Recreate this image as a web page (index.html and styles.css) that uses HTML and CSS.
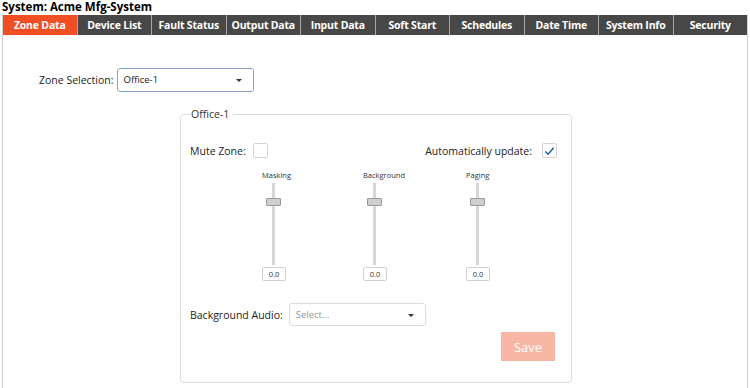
FILE: index.html
```html
<!DOCTYPE html>
<html>
<head>
  <meta charset="utf-8">
  <title>Acme Mfg-System - Zone Data</title>
  <link rel="stylesheet" href="styles.css">
</head>
<body>
  <div class="sys-title">System: Acme Mfg-System</div>

  <div class="panel">
    <nav class="tabs">
      <a class="tab active">Zone Data</a>
      <a class="tab">Device List</a>
      <a class="tab">Fault Status</a>
      <a class="tab">Output Data</a>
      <a class="tab">Input Data</a>
      <a class="tab">Soft Start</a>
      <a class="tab">Schedules</a>
      <a class="tab">Date Time</a>
      <a class="tab">System Info</a>
      <a class="tab">Security</a>
    </nav>

    <div class="zone-row">
      <label class="zone-label">Zone Selection:</label>
      <div class="select select-zone">Office-1<span class="caret"></span></div>
    </div>

    <fieldset class="zone-box">
      <legend>Office-1</legend>

      <div class="toggles">
        <label class="check">Mute Zone: <span class="box"></span></label>
        <label class="check auto">Automatically update:
          <span class="box">
            <svg width="14" height="14" viewBox="0 0 14 14"><polyline points="2.5,7.5 5.5,10.5 11.5,3.5" fill="none" stroke="#1d5fa8" stroke-width="1.6"/></svg>
          </span>
        </label>
      </div>

      <div class="sliders">
        <div class="slider">
          <div class="slider-name">Masking</div>
          <div class="track"><span class="thumb"></span></div>
          <div class="value">0.0</div>
        </div>
        <div class="slider">
          <div class="slider-name">Background</div>
          <div class="track"><span class="thumb"></span></div>
          <div class="value">0.0</div>
        </div>
        <div class="slider">
          <div class="slider-name">Paging</div>
          <div class="track"><span class="thumb"></span></div>
          <div class="value">0.0</div>
        </div>
      </div>

      <div class="audio-row">
        <label>Background Audio:</label>
        <div class="select select-audio"><span class="placeholder">Select...</span><span class="caret"></span></div>
      </div>

      <div class="actions">
        <button class="save" disabled>Save</button>
      </div>
    </fieldset>
  </div>
</body>
</html>
```

FILE: styles.css
```css
body {
  margin: 0;
  font-family: "Open Sans", "Noto Sans", sans-serif;
  font-size: 10.5px;
  color: #222;
  background: #fff;
}
.sys-title {
  font-weight: bold;
  font-size: 11.5px;
  color: #000;
  height: 15px;
  line-height: 14px;
  padding-left: 2px;
}
.panel {
  margin-left: 2px;
  width: 744px;
  height: 373px;
  border-left: 1px solid #cfcfcf;
  border-right: 1px solid #cfcfcf;
}
.tabs {
  display: flex;
  height: 20px;
}
.tab {
  flex: 1;
  background: #474747;
  color: #fff;
  font-weight: bold;
  font-size: 10.5px;
  line-height: 20px;
  text-align: center;
  border-right: 1px solid #a8a8a8;
  letter-spacing: -0.2px;
}
.tab:last-child {
  border-right: none;
}
.tab.active {
  background: #f04e23;
}
.zone-row {
  display: flex;
  align-items: center;
  margin-top: 33px;
  padding-left: 36px;
}
.zone-label {
  margin-right: 3px;
  font-size: 10.5px;
}
.select {
  position: relative;
  box-sizing: border-box;
  background: #fff;
  border-radius: 3px;
  font-size: 9.5px;
  padding-left: 6px;
}
.select-zone {
  width: 137px;
  height: 24px;
  line-height: 22px;
  border: 1px solid #7fa6d2;
  color: #222;
}
.select-audio {
  width: 137px;
  height: 23px;
  line-height: 21px;
  border: 1px solid #dcdcdc;
}
.placeholder {
  color: #999;
}
.caret {
  position: absolute;
  right: 11px;
  top: 50%;
  margin-top: -1px;
  border-left: 3px solid transparent;
  border-right: 3px solid transparent;
  border-top: 3px solid #333;
}
.zone-box {
  margin: 15px 0 0 177px;
  width: 392px;
  height: 276px;
  box-sizing: border-box;
  border: 1px solid #dcdcdc;
  border-radius: 4px;
  padding: 6px 14px 0 9px;
}
.zone-box legend {
  font-size: 10.5px;
  padding: 0 4px 0 1px;
  margin-left: 0;
  color: #333;
}
.toggles {
  display: flex;
  justify-content: space-between;
  margin-top: 16px;
}
.check {
  display: flex;
  align-items: center;
  font-size: 10.5px;
}
.box {
  display: inline-flex;
  align-items: center;
  justify-content: center;
  box-sizing: border-box;
  width: 15px;
  height: 15px;
  border: 1px solid #d4d4d4;
  border-radius: 2px;
  margin-left: 7px;
}
.auto .box {
  margin-left: 10px;
}
.sliders {
  display: grid;
  grid-template-columns: 101px 103px 24px;
  padding-left: 72px;
  margin-top: 12px;
}
.slider {
  width: 24px;
}
.slider-name {
  font-size: 7.5px;
  white-space: nowrap;
  height: 13px;
  line-height: 11px;
  color: #333;
}
.track {
  position: relative;
  width: 3px;
  height: 82px;
  margin: 0 0 2px 10px;
  background: #d6d6d6;
}
.thumb {
  position: absolute;
  left: -6px;
  top: 15px;
  box-sizing: border-box;
  width: 15px;
  height: 8px;
  background: #cfcfcf;
  border: 1px solid #9a9a9a;
  border-radius: 1px;
}
.value {
  box-sizing: border-box;
  width: 24px;
  height: 14px;
  border: 1px solid #d0d0d0;
  border-radius: 2px;
  font-size: 7.5px;
  line-height: 12px;
  text-align: center;
  color: #333;
}
.audio-row {
  display: flex;
  align-items: center;
  margin-top: 22px;
  font-size: 10.5px;
}
.audio-row label {
  margin-right: 6px;
}
.actions {
  display: flex;
  justify-content: flex-end;
  padding-right: 2px;
  margin-top: 6px;
}
.save {
  width: 54px;
  height: 29px;
  border: none;
  background: #f8b6a5;
  color: #fff;
  font-family: inherit;
  font-size: 13px;
  padding: 0;
}
```
